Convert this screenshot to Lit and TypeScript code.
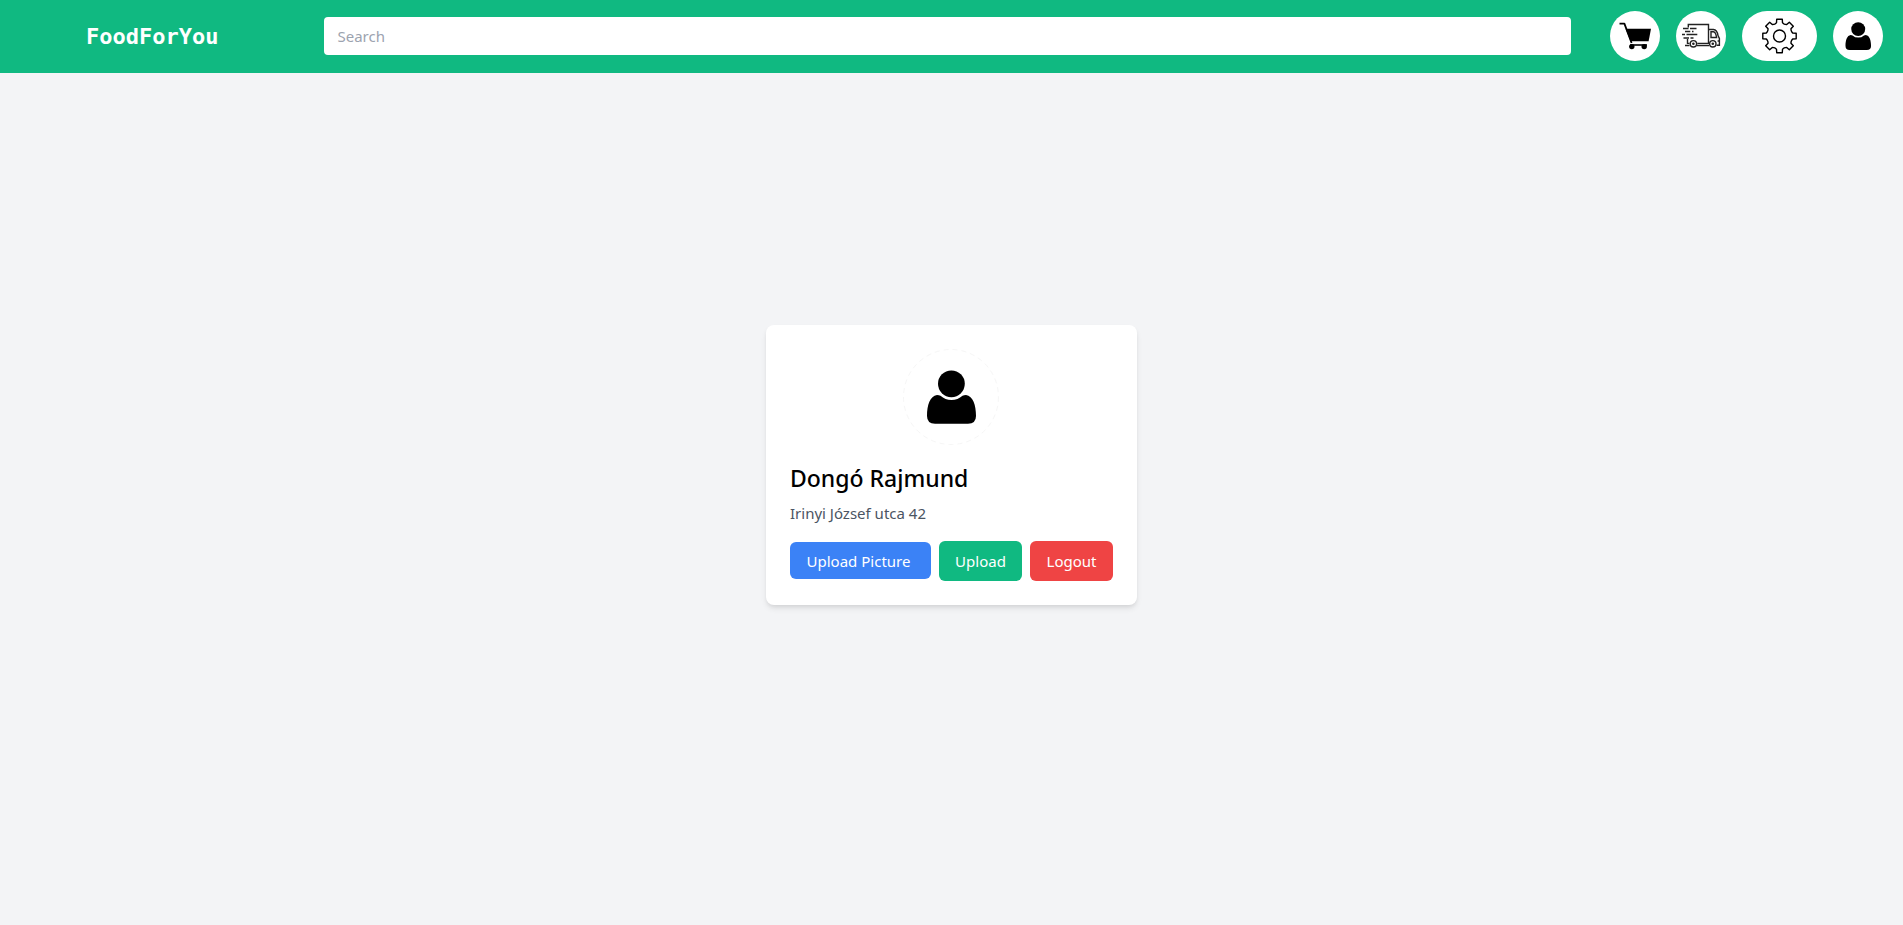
import { LitElement, html, css, svg } from "lit";
import { customElement, property } from "lit/decorators.js";

const gearPath = (): string => {
  const tooth: [number, number][] = [[-4.2, -12.2], [-3, -13.2], [-2.8, -16.7], [2.8, -16.7], [3, -13.2], [4.2, -12.2]];
  const points: string[] = [];
  for (let k = 0; k < 8; k++) {
    const a = (k * Math.PI) / 4;
    for (const [x, y] of tooth) {
      const px = x * Math.cos(a) - y * Math.sin(a);
      const py = x * Math.sin(a) + y * Math.cos(a);
      points.push(`${px.toFixed(2)} ${py.toFixed(2)}`);
    }
  }
  return `M${points.join("L")}Z`;
};

const personShape = svg`
  <circle cx="48.4" cy="34.8" r="13.4"/>
  <path d="M37.5 46.8A16.3 16.3 0 0 0 59.5 46.8Q61 46 63 46C70 47 73 56 73 67Q73 74.7 65 74.7H32Q24 74.7 24 67C24 56 27 47 34 46Q36 46 37.5 46.8Z"/>`;

const cartIcon = html`
  <svg width="50" height="50" viewBox="0 0 50 50" aria-hidden="true">
    <path d="M9.5 12.6H14.4L21.6 32" fill="none" stroke="#000" stroke-width="1.8" stroke-linejoin="round"/>
    <path d="M15.6 17.7H41L38.6 30.2H20.6Z"/>
    <path d="M20 34H37" fill="none" stroke="#000" stroke-width="1.6"/>
    <circle cx="21.8" cy="35.6" r="2.7"/>
    <circle cx="34.2" cy="35.6" r="2.7"/>
  </svg>`;

const truckIcon = html`
  <svg width="50" height="50" viewBox="0 0 50 50" aria-hidden="true">
    <g fill="none" stroke="#222" stroke-width="1.4">
      <path d="M12.3 16.5V13.5H32.5V32.4M11.5 28V32.4H13.5M32.5 18.5H37.5Q41 18.7 42 24.5L43.4 27.5V34.3H40.6"/>
      <path d="M35 20.8H37.4Q39.8 21 40.6 26.5H35ZM41.6 30H43.2"/>
      <path d="M9 34.5H13.5M21.3 32.4H33M21 34.5H33"/>
      <circle cx="17.4" cy="32.8" r="3.2"/>
      <circle cx="36.8" cy="32.8" r="3.2"/>
      <path d="M7 17.5H12.5M14 17.5H20.5M9 20.5H14.3M16 20.5H17.5M6 23.5H9M10.5 23.5H21.3M7.5 27H13M14.5 27H17.5"/>
    </g>
    <circle cx="17.4" cy="32.8" r="1.3" fill="#222"/>
    <circle cx="36.8" cy="32.8" r="1.3" fill="#222"/>
  </svg>`;

const gearIcon = html`
  <svg width="75" height="50" viewBox="-37.5 -25 75 50" aria-hidden="true">
    <g fill="none" stroke="#000" stroke-width="1.4" stroke-linejoin="round">
      <path d=${gearPath()}/>
      <circle r="6"/>
    </g>
  </svg>`;

const userIcon = html`
  <svg width="50" height="50" viewBox="0 0 96 96" aria-hidden="true">${personShape}</svg>`;

@customElement("site-header")
class SiteHeader extends LitElement {
  static styles = css`
    :host { display: block; background: #10b981; }
    .bar { display: flex; align-items: center; padding: 11px 0 12px; }
    .brand {
      box-sizing: border-box;
      width: 16%;
      padding-top: 2px;
      text-align: center;
      color: #fff;
      font: bold 22px/32px "DejaVu Sans Mono", monospace;
      text-decoration: none;
    }
    .search { flex: 1; display: flex; margin: 0 39px 0 20px; }
    .field {
      flex: 1;
      box-sizing: border-box;
      height: 38px;
      padding: 0 13px;
      border: 0;
      border-radius: 4px;
      background: #fff;
      color: #111827;
      font: 15px/24px "Noto Sans", sans-serif;
    }
    .field::placeholder { color: #9ca3af; opacity: 1; }
    .actions { display: flex; gap: 16px; margin-right: 20px; }
    .action {
      display: flex;
      justify-content: center;
      width: 50px;
      height: 50px;
      padding: 0;
      border: 0;
      border-radius: 25px;
      background: #fff;
      cursor: pointer;
    }
    .wide { width: 75px; }
  `;

  render() {
    return html`
      <header class="bar">
        <a class="brand" href="#">FoodForYou</a>
        <form class="search" role="search">
          <input class="field" type="search" placeholder="Search" aria-label="Search">
        </form>
        <nav class="actions">
          <button class="action" type="button" aria-label="Cart">${cartIcon}</button>
          <button class="action" type="button" aria-label="Orders">${truckIcon}</button>
          <button class="action wide" type="button" aria-label="Settings">${gearIcon}</button>
          <button class="action" type="button" aria-label="Profile">${userIcon}</button>
        </nav>
      </header>`;
  }
}

@customElement("profile-card")
class ProfileCard extends LitElement {
  @property() name = "";
  @property() address = "";

  static styles = css`
    :host {
      display: block;
      padding: 24px;
      border-radius: 8px;
      background: #fff;
      box-shadow: 0 4px 6px -1px rgba(0, 0, 0, 0.1), 0 2px 4px -1px rgba(0, 0, 0, 0.06);
      font: 15px/24px "Noto Sans", sans-serif;
    }
    .avatar { display: block; width: 97px; height: 96px; margin: 0 auto 17px; }
    .name { margin: 0 0 7px; color: #000; font-size: 23px; line-height: 32px; font-weight: 500; }
    .address { margin: 0 0 16px; color: #4b5563; }
    .buttons { display: flex; align-items: center; gap: 8px; }
    .button {
      box-sizing: border-box;
      min-width: 83px;
      height: 40px;
      padding: 0 15px;
      border: 0;
      border-radius: 6px;
      color: #fff;
      font: inherit;
      text-align: center;
      white-space: nowrap;
      cursor: pointer;
    }
    .picture {
      min-width: 141px;
      height: 37px;
      margin-bottom: 1px;
      padding: 7px 20px 6px 16px;
      background: #3b82f6;
    }
    .upload { background: #10b981; }
    .logout { background: #ef4444; }
  `;

  render() {
    return html`
      <svg class="avatar" viewBox="0 0 97 96" role="img" aria-label="Profile picture">
        <circle cx="48" cy="48" r="47.5" fill="none" stroke="#f6f6f6" stroke-dasharray="5 4"/>
        ${personShape}
      </svg>
      <h2 class="name">${this.name}</h2>
      <p class="address">${this.address}</p>
      <div class="buttons">
        <label class="button picture" for="picture">Upload Picture</label>
        <input id="picture" type="file" accept="image/*" hidden>
        <button class="button upload" type="button">Upload</button>
        <button class="button logout" type="button">Logout</button>
      </div>`;
  }
}

@customElement("app-root")
class AppRoot extends LitElement {
  static styles = css`
    :host { display: flex; flex-direction: column; min-height: 100vh; background: #f3f4f6; }
    .content { flex: 1; display: flex; align-items: center; justify-content: center; padding-bottom: 68px; }
  `;

  render() {
    return html`
      <site-header></site-header>
      <main class="content">
        <profile-card name="Dongó Rajmund" address="Irinyi József utca 42"></profile-card>
      </main>`;
  }
}
